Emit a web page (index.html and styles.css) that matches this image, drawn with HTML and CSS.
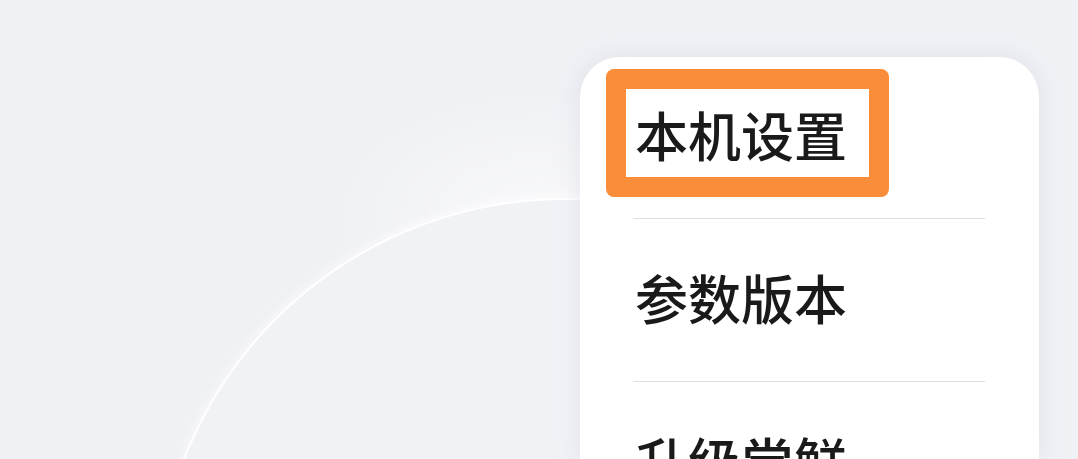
FILE: index.html
```html
<!DOCTYPE html>
<html lang="zh-CN">
<head>
<meta charset="utf-8">
<title>设置</title>
<link rel="stylesheet" href="styles.css">
</head>
<body>
<div class="stage">
  <div class="glow"></div>
  <div class="ring"></div>
  <div class="card">
    <div class="highlight"></div>
    <ul class="menu">
      <li class="item">本机设置</li>
      <li class="item">参数版本</li>
      <li class="item">升级尝鲜</li>
    </ul>
  </div>
</div>
</body>
</html>
```
FILE: styles.css
```css
html, body {
  margin: 0;
  padding: 0;
  background: #f0f1f5;
}

.stage {
  position: relative;
  width: 1078px;
  height: 459px;
  overflow: hidden;
  padding: 57px 0 0 580px;
  box-sizing: border-box;
  font-family: "Noto Sans CJK SC", "Noto Sans", sans-serif;
}

.glow {
  position: absolute;
  left: 330px;
  top: 90px;
  width: 420px;
  height: 260px;
  border-radius: 50%;
  background: radial-gradient(ellipse at center, rgba(255,255,255,0.55) 0%, rgba(255,255,255,0) 70%);
}

.ring {
  position: absolute;
  left: 155px;
  top: 198px;
  width: 820px;
  height: 820px;
  border-radius: 50%;
  border: 2px solid rgba(255,255,255,0.95);
  background: #f1f2f6;
  box-shadow: 0 -4px 10px rgba(255,255,255,0.5);
  box-sizing: border-box;
}

.card {
  position: relative;
  width: 459px;
  height: 402px;
  background: #ffffff;
  border-radius: 40px 40px 0 0;
  box-shadow: 0 0 24px rgba(150, 155, 170, 0.18);
}

.highlight {
  position: absolute;
  left: 26px;
  top: 12px;
  width: 283px;
  height: 128px;
  border: 20px solid #f98d3a;
  border-radius: 8px;
  box-sizing: border-box;
}

.menu {
  list-style: none;
  margin: 0 54px 0 53px;
  padding: 0;
}

.item {
  font-size: 53px;
  font-weight: 500;
  line-height: 53px;
  color: #1a1a1a;
  padding: 51px 0 57px 2px;
  border-bottom: 1px solid #dedede;
}

.item + .item {
  padding-top: 52px;
  padding-bottom: 57px;
}
```
